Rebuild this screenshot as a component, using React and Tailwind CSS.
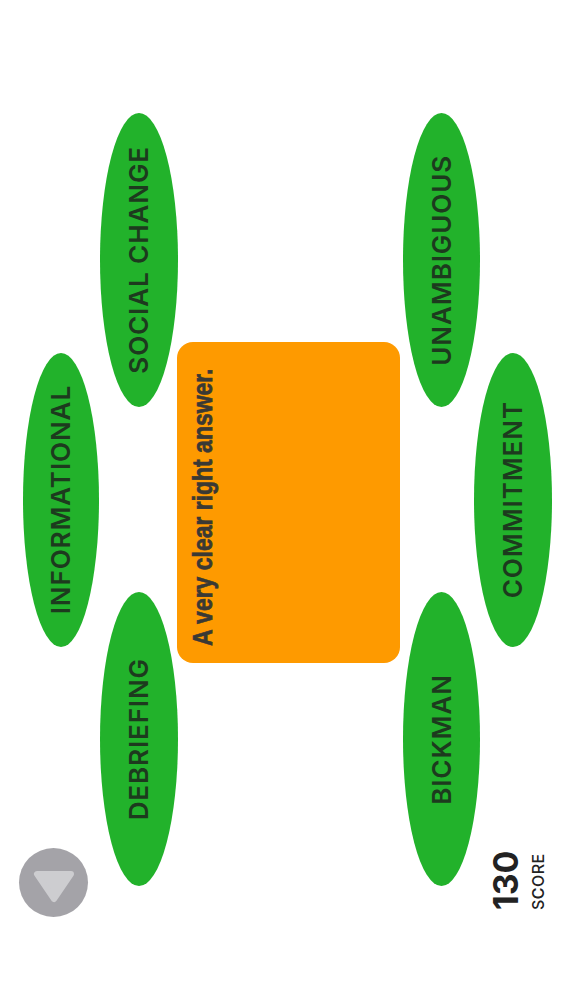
import React from "react";

const labelFont = { fontFamily: "Inter, 'DejaVu Sans', sans-serif" };

function Oval({ label, className = "" }) {
  return (
    <div
      className={`h-[294px] rounded-[50%] bg-[#22b22b] flex items-center justify-center ${className}`}
    >
      <span
        className="[writing-mode:vertical-rl] rotate-180 text-[26px] font-semibold tracking-[0.035em] text-[#1d3a1e] leading-none whitespace-nowrap"
        style={labelFont}
      >
        {label}
      </span>
    </div>
  );
}

export default function App() {
  return (
    <div className="relative w-full h-[1000px] bg-white overflow-hidden">
      <div className="flex items-start h-full">
        {/* column A */}
        <div className="ml-[23px] w-[76px] pt-[353px]">
          <Oval label="INFORMATIONAL" className="w-[76px]" />
        </div>
        {/* column B */}
        <div className="ml-px w-[78px] pt-[113px] flex flex-col gap-[185px]">
          <Oval label="SOCIAL CHANGE" className="w-[78px]" />
          <Oval label="DEBRIEFING" className="w-[78px]" />
        </div>
        {/* card */}
        <div className="-ml-px mt-[342px] w-[223px] h-[321px] rounded-[16px] bg-[#fe9a00] rotate-180 [writing-mode:vertical-rl] pt-[17px] pr-[12px]">
          <span
            className="inline-block origin-top scale-y-[0.82] text-[28px] font-bold leading-none text-[#3a3934] whitespace-nowrap [-webkit-text-stroke:0.7px_#3a3934]"
            style={{ fontFamily: "'Liberation Sans', Arial, sans-serif" }}
          >
            A very clear right answer.
          </span>
        </div>
        {/* column D */}
        <div className="ml-[3px] w-[77px] pt-[113px] flex flex-col gap-[185px]">
          <Oval label="UNAMBIGUOUS" className="w-[77px]" />
          <Oval label="BICKMAN" className="w-[77px]" />
        </div>
        {/* column E */}
        <div className="-ml-[6px] w-[78px] pt-[353px]">
          <Oval label="COMMITMENT" className="w-[78px]" />
        </div>
      </div>

      {/* back button */}
      <button className="absolute left-[19px] top-[848px] w-[69px] h-[69px] rounded-full bg-[#a4a3a8] flex items-center justify-center">
        <svg width="44" height="34" viewBox="0 0 44 34" className="mt-[9px]">
          <polygon
            points="5,4 39,4 22,29"
            fill="#cdcdd0"
            stroke="#cdcdd0"
            strokeWidth="6"
            strokeLinejoin="round"
          />
        </svg>
      </button>

      {/* score */}
      <div
        className="absolute left-[489px] top-[838px] h-[72px] [writing-mode:vertical-rl] rotate-180 flex flex-col gap-[7px] text-[#222]"
        style={labelFont}
      >
        <span className="text-[34px] font-bold leading-none">130</span>
        <span className="text-[16px] font-medium leading-none tracking-[0.03em]">SCORE</span>
      </div>
    </div>
  );
}
